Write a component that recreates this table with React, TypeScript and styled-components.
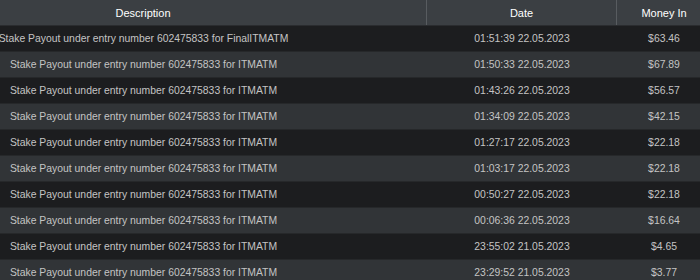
import React from "react";
import styled, { createGlobalStyle } from "styled-components";

interface Payout {
  description: string;
  date: string;
  amount: string;
}

const rows: Payout[] = [
  { description: "Stake Payout under entry number 602475833 for FinalITMATM", date: "01:51:39 22.05.2023", amount: "$63.46" },
  { description: "Stake Payout under entry number 602475833 for ITMATM", date: "01:50:33 22.05.2023", amount: "$67.89" },
  { description: "Stake Payout under entry number 602475833 for ITMATM", date: "01:43:26 22.05.2023", amount: "$56.57" },
  { description: "Stake Payout under entry number 602475833 for ITMATM", date: "01:34:09 22.05.2023", amount: "$42.15" },
  { description: "Stake Payout under entry number 602475833 for ITMATM", date: "01:27:17 22.05.2023", amount: "$22.18" },
  { description: "Stake Payout under entry number 602475833 for ITMATM", date: "01:03:17 22.05.2023", amount: "$22.18" },
  { description: "Stake Payout under entry number 602475833 for ITMATM", date: "00:50:27 22.05.2023", amount: "$22.18" },
  { description: "Stake Payout under entry number 602475833 for ITMATM", date: "00:06:36 22.05.2023", amount: "$16.64" },
  { description: "Stake Payout under entry number 602475833 for ITMATM", date: "23:55:02 21.05.2023", amount: "$4.65" },
  { description: "Stake Payout under entry number 602475833 for ITMATM", date: "23:29:52 21.05.2023", amount: "$3.77" },
];

const App = () => {
  return (
    <>
      <GlobalStyle />
      <Table>
        <HeaderRow>
          <HeadCell $desc>Description</HeadCell>
          <HeadCell>Date</HeadCell>
          <HeadCell $last>Money In</HeadCell>
        </HeaderRow>
        {rows.map((row, i) => (
          <Row key={i} $odd={i % 2 === 1}>
            <Cell $desc>{row.description}</Cell>
            <Cell>{row.date}</Cell>
            <Cell>{row.amount}</Cell>
          </Row>
        ))}
      </Table>
    </>
  );
};

const GlobalStyle = createGlobalStyle`
  html, body {
    margin: 0;
    background: #1c1d1f;
    overflow: hidden;
  }
  body {
    font-family: "Liberation Sans", Arial, sans-serif;
  }
`;

const Table = styled.div`
  width: 711px;
  display: flex;
  flex-direction: column;
`;

const HeaderRow = styled.div`
  display: grid;
  grid-template-columns: 427px 190px 94px;
  height: 25px;
  background: #3b3f43;
  border-bottom: 1px solid #2a2c2f;
`;

const HeadCell = styled.div<{ $desc?: boolean; $last?: boolean }>`
  display: flex;
  align-items: center;
  justify-content: center;
  color: #ffffff;
  font-size: 11px;
  padding-right: ${(p) => (p.$desc ? "140px" : "0")};
  border-right: ${(p) => (p.$last ? "none" : "1px solid #585c60")};
`;

const Row = styled.div<{ $odd: boolean }>`
  display: grid;
  grid-template-columns: 427px 190px 94px;
  height: 25px;
  background: ${(p) => (p.$odd ? "#313437" : "#1c1d1f")};
  border-bottom: 1px solid #26282a;
`;

const Cell = styled.div<{ $desc?: boolean }>`
  display: flex;
  align-items: center;
  justify-content: center;
  color: #c4c4c4;
  font-size: 10.4px;
  white-space: nowrap;
  padding-right: ${(p) => (p.$desc ? "140px" : "0")};
`;

export default App;
